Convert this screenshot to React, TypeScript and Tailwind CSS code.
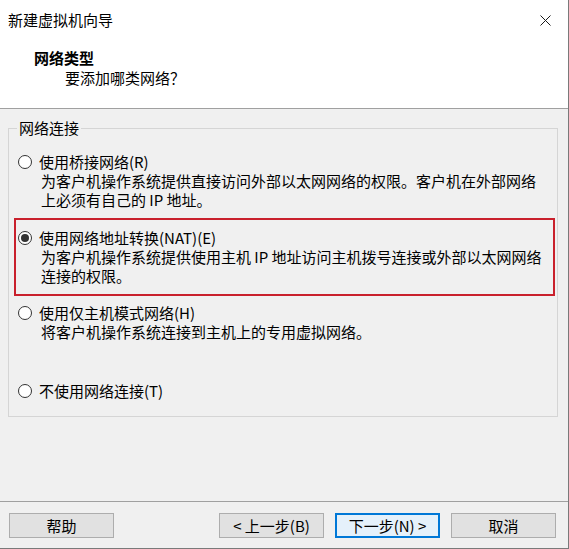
const FONT = '"Segoe UI", "Noto Sans CJK SC", "Noto Sans", sans-serif'

function Radio({ checked }: { checked?: boolean }) {
  return (
    <span className="w-[14px] h-[14px] shrink-0 rounded-full border border-[#333333] bg-white flex items-center justify-center">
      {checked && <span className="w-[8px] h-[8px] rounded-full bg-[#333333]" />}
    </span>
  )
}

function OptionLabel({ text, checked }: { text: string; checked?: boolean }) {
  return (
    <div className="flex items-center h-[19px] gap-[7px]">
      <Radio checked={checked} />
      <span className="leading-[19px] whitespace-nowrap">{text}</span>
    </div>
  )
}

function Desc({ lines }: { lines: string[] }) {
  return (
    <div className="leading-[19px] whitespace-nowrap">
      {lines.map(line => (
        <div key={line}>{line}</div>
      ))}
    </div>
  )
}

function WizardButton({ label, primary }: { label: string; primary?: boolean }) {
  return (
    <button
      type="button"
      className={`w-[105px] h-[25px] text-[15px] leading-none flex items-center justify-center ${
        primary
          ? 'bg-[#e5f1fb] border-2 border-[#0078d7]'
          : 'bg-[#e1e1e1] border border-[#adadad]'
      }`}
    >
      {label}
    </button>
  )
}

export default function App() {
  return (
    <div
      className="w-[569px] h-[549px] bg-[#f0f0f0] border-r border-b border-[#7a7a7a] flex flex-col text-[15px] text-black"
      style={{ fontFamily: FONT }}
    >
      {/* 头部：标题栏 + 页面说明 */}
      <header className="h-[109px] shrink-0 bg-white border-b border-[#a0a0a0]">
        <div className="h-[40px] flex items-center justify-between pl-[8px] pr-[17px]">
          <span className="leading-[20px]">新建虚拟机向导</span>
          <svg width="11" height="11" viewBox="0 0 11 11" className="shrink-0">
            <path d="M0.5 0.5 L10.5 10.5 M10.5 0.5 L0.5 10.5" stroke="#1a1a1a" strokeWidth="1" fill="none" />
          </svg>
        </div>
        <div className="mt-[8px] pl-[34px] font-bold leading-[20px]">网络类型</div>
        <div className="pl-[65px] leading-[20px]">要添加哪类网络？</div>
      </header>

      {/* 网络连接分组 */}
      <div className="flex-1 pl-[8px] pr-[10px]">
        <fieldset className="mt-[9px] h-[299px] border border-[#d5d5d5] p-0 m-0">
          <legend className="ml-[8px] px-[2px] leading-[20px]">网络连接</legend>
          <div className="pt-[14px]">
            <div className="pl-[9px]">
              <OptionLabel text="使用桥接网络(R)" />
            </div>
            <div className="pl-[32px]">
              <Desc
                lines={[
                  '为客户机操作系统提供直接访问外部以太网网络的权限。客户机在外部网络',
                  '上必须有自己的 IP 地址。',
                ]}
              />
            </div>

            <div className="mt-[9px] ml-[5px] mr-[2px] border-2 border-[#c9202c] pt-[8px] pb-[9px]">
              <div className="pl-[2px]">
                <OptionLabel text="使用网络地址转换(NAT)(E)" checked />
              </div>
              <div className="pl-[25px]">
                <Desc
                  lines={[
                    '为客户机操作系统提供使用主机 IP 地址访问主机拨号连接或外部以太网网络',
                    '连接的权限。',
                  ]}
                />
              </div>
            </div>

            <div className="mt-[7px] pl-[9px]">
              <OptionLabel text="使用仅主机模式网络(H)" />
            </div>
            <div className="pl-[32px]">
              <Desc lines={['将客户机操作系统连接到主机上的专用虚拟网络。']} />
            </div>

            <div className="mt-[40px] pl-[9px]">
              <OptionLabel text="不使用网络连接(T)" />
            </div>
          </div>
        </fieldset>
      </div>

      {/* 底部按钮 */}
      <footer className="h-[47px] shrink-0 border-t border-[#a0a0a0] pt-[11px] pl-[9px] pr-[12px] flex items-start">
        <WizardButton label="帮助" />
        <div className="flex-1" />
        <div className="flex gap-[11px]">
          <WizardButton label="< 上一步(B)" />
          <WizardButton label="下一步(N) >" primary />
          <WizardButton label="取消" />
        </div>
      </footer>
    </div>
  )
}
